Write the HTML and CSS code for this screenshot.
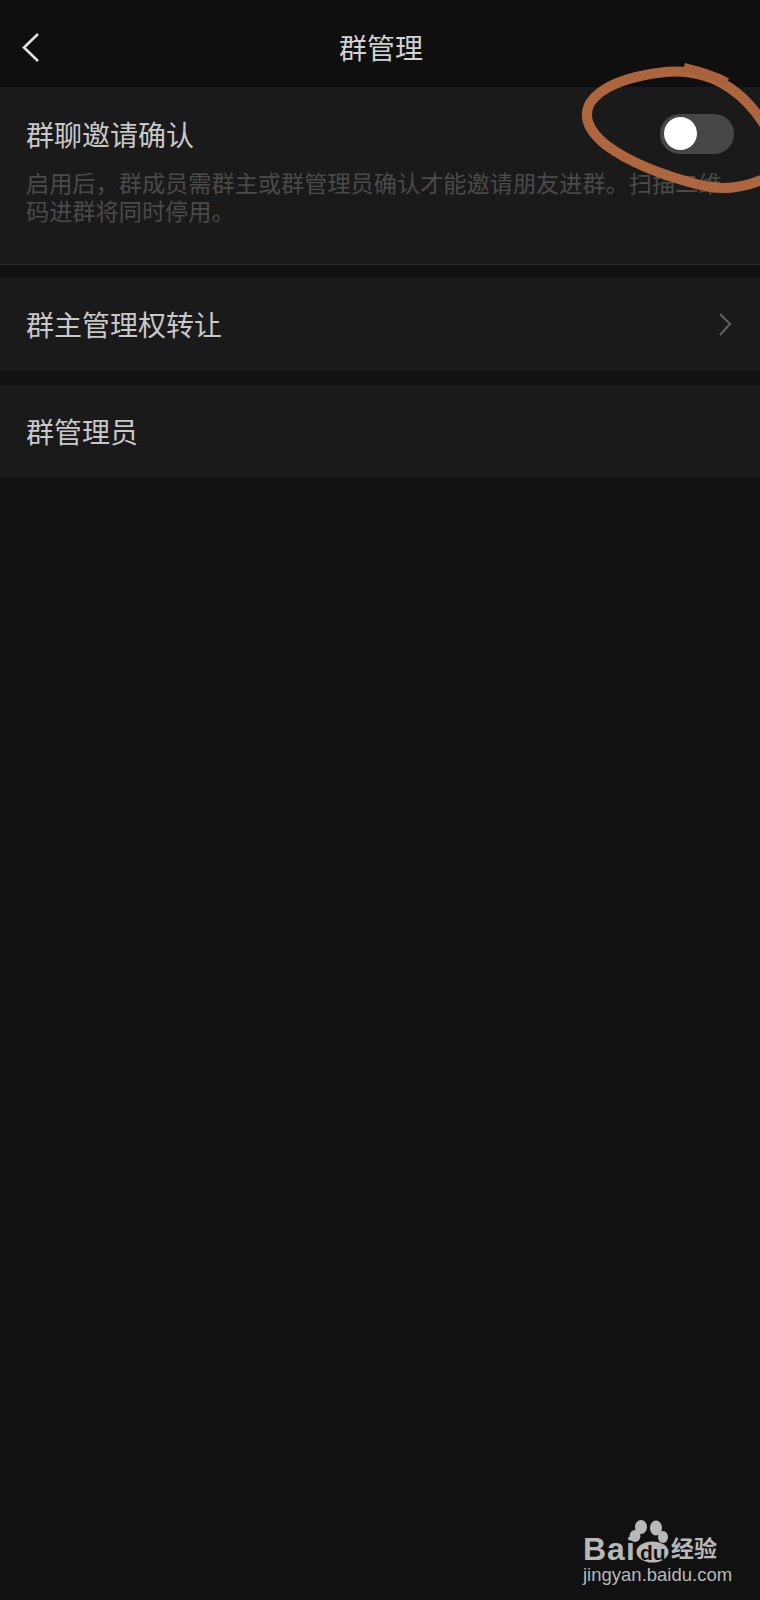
FILE: index.html
```html
<!DOCTYPE html>
<html lang="zh-CN">
<head>
    <meta charset="UTF-8">
    <title>群管理</title>
    <link rel="stylesheet" href="styles.css">
</head>
<body>
    <div class="page">
        <div class="header">
            <svg class="back" width="24" height="36" viewBox="0 0 24 36">
                <path d="M17 3 L3 16.5 L17 30" fill="none" stroke="#e0e0e0" stroke-width="2.6"/>
            </svg>
            <h1>群管理</h1>
        </div>

        <div class="section invite">
            <div class="invite-top">
                <span class="label">群聊邀请确认</span>
                <div class="toggle"><div class="knob"></div></div>
            </div>
            <div class="desc">启用后，群成员需群主或群管理员确认才能邀请朋友进群。扫描二维码进群将同时停用。</div>
        </div>

        <div class="section row">
            <span class="label">群主管理权转让</span>
            <svg class="arrow" width="14" height="24" viewBox="0 0 14 24">
                <path d="M2 2 L12 12 L2 23" fill="none" stroke="#5e5e5e" stroke-width="2.2"/>
            </svg>
        </div>

        <div class="section row">
            <span class="label">群管理员</span>
        </div>

        <!-- hand drawn circle on top of the screenshot -->
        <svg class="scribble" width="760" height="200" viewBox="0 0 760 200">
            <path d="M764 179 C745 187 722 191 700 185 C665 176 630 163 606 145 C590 132 582 118 590 103 C602 85 630 76 665 72 C690 70 712 76 730 88 C745 98 755 110 764 124" fill="none" stroke="#b4693f" stroke-width="10" stroke-linecap="round" stroke-opacity="0.96"/>
            <path d="M684 67 C700 71 715 75 727 82" fill="none" stroke="#a9623b" stroke-width="8"/>
        </svg>

        <div class="watermark">
            <div class="logo">
                <span class="bai">Bai</span>
                <div class="paw">
                    <svg width="42" height="43" viewBox="0 0 42 43">
                        <ellipse cx="12" cy="7" rx="6" ry="7" fill="#b8b8b8"/>
                        <ellipse cx="27" cy="8" rx="6" ry="7.5" fill="#b8b8b8"/>
                        <ellipse cx="6" cy="16" rx="5.5" ry="6" fill="#b8b8b8"/>
                        <ellipse cx="34" cy="17" rx="5" ry="6" fill="#b8b8b8"/>
                        <ellipse cx="23.5" cy="32" rx="16" ry="10.5" fill="#b8b8b8"/>
                    </svg>
                    <span class="du">du</span>
                </div>
                <span class="jingyan">经验</span>
            </div>
            <div class="url">jingyan.baidu.com</div>
        </div>
    </div>
</body>
</html>
```

FILE: styles.css
```css
* {
    box-sizing: border-box;
}

body {
    margin: 0;
    background-color: #111111;
    font-family: "Noto Sans CJK SC", "Liberation Sans", sans-serif;
}

.page {
    position: relative;
    width: 760px;
    height: 1600px;
    overflow: hidden;
}

.header {
    position: relative;
    height: 87px;
    padding-top: 7px;
    display: flex;
    align-items: center;
    justify-content: center;
    background-color: #0f0f0f;
}

.header h1 {
    margin: 0 0 0 2px;
    font-size: 28px;
    font-weight: 400;
    color: #d2d2d2;
}

.back {
    position: absolute;
    left: 21px;
    top: 31px;
}

.section {
    background-color: #1a1a1a;
    margin-bottom: 14px;
}

.label {
    font-size: 28px;
    line-height: 40px;
    color: #c8c8c8;
}

.invite {
    height: 178px;
    margin-bottom: 13px;
    padding: 27px 26px 0 26px;
    border-bottom: 1px solid #2a2a2a;
}

.invite-top {
    display: flex;
    justify-content: space-between;
    align-items: center;
}

.toggle {
    width: 74px;
    height: 40px;
    padding: 3px 4px;
    border-radius: 20px;
    background-color: #464646;
}

.knob {
    width: 33px;
    height: 33px;
    border-radius: 50%;
    background-color: white;
}

.desc {
    margin-top: 15px;
    font-size: 23.2px;
    line-height: 27.5px;
    color: #4a4a4a;
}

.row {
    height: 93px;
    padding: 0 28px 2px 26px;
    display: flex;
    justify-content: space-between;
    align-items: center;
}

.scribble {
    position: absolute;
    left: 0;
    top: 0;
}

.watermark {
    position: absolute;
    left: 583px;
    top: 1520px;
    width: 140px;
    color: #b8b8b8;
}

.logo {
    display: flex;
    align-items: flex-end;
    height: 43px;
}

.bai {
    width: 46px;
    flex-shrink: 0;
    font-family: "Liberation Sans", sans-serif;
    font-size: 32px;
    font-weight: 700;
    line-height: 28px;
    letter-spacing: 1px;
    white-space: nowrap;
}

.paw {
    position: relative;
    width: 42px;
    height: 43px;
    flex-shrink: 0;
}

.paw svg {
    position: absolute;
    left: 0;
    top: 0;
}

.du {
    position: absolute;
    left: 11px;
    top: 22px;
    font-family: "Liberation Sans", sans-serif;
    font-size: 21px;
    font-weight: 700;
    line-height: 22px;
    color: #111111;
}

.jingyan {
    font-size: 23px;
    font-weight: 700;
    line-height: 28px;
    margin-bottom: 2px;
    white-space: nowrap;
}

.url {
    font-family: "Liberation Sans", sans-serif;
    font-size: 18.5px;
    line-height: 24px;
    white-space: nowrap;
}
```
